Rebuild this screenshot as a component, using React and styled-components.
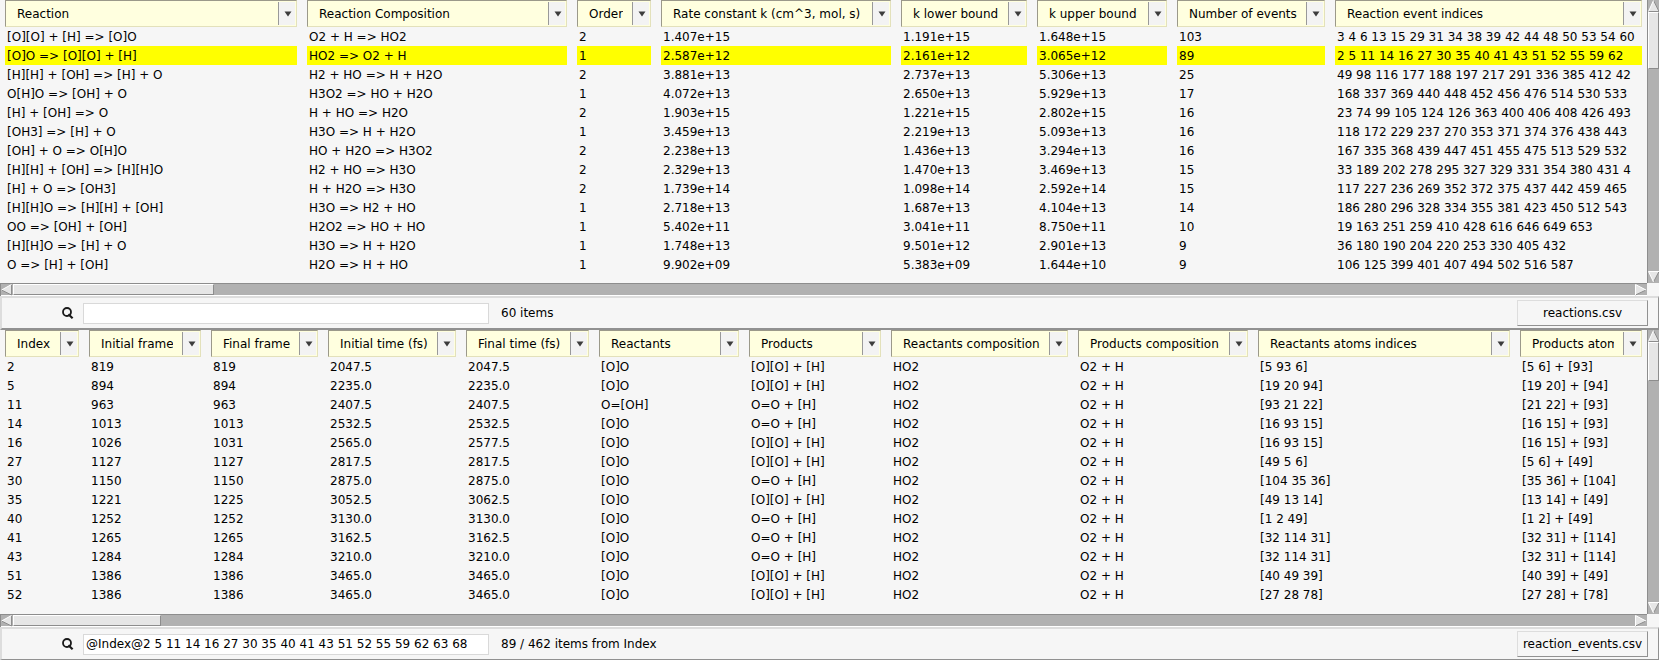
import React from "react";
import styled, { createGlobalStyle, css } from "styled-components";

const GlobalStyle = createGlobalStyle`
  * { box-sizing: border-box; }
  body { margin: 0; background: #f6f6f6; }
  body, button, input {
    font-family: "DejaVu Sans", sans-serif;
    font-size: 12px;
    color: #000;
  }
  button, input { margin: 0; padding: 0; border-radius: 0; }
`;

const Window = styled.main`
  display: grid;
  grid-template-rows: 1fr 1fr;
  min-height: 100vh;
  background: #f6f6f6;
`;

const Panel = styled.section`
  display: flex;
  flex-direction: column;
  min-width: 0;
`;

const ScrollArea = styled.div`
  flex: 1;
  display: grid;
  grid-template-columns: minmax(0, 1fr) 12px;
  grid-template-rows: 1fr 13px;
`;

const Viewport = styled.div`
  overflow: hidden;
`;

const Grid = styled.table`
  width: 100%;
  table-layout: fixed;
  border-collapse: collapse;
`;

const HeadCell = styled.th`
  height: 27px;
  padding: 0 5px;
  text-align: left;
  font-weight: normal;
`;

const HeadBox = styled.div`
  display: flex;
  height: 27px;
  padding: 1px 1px 1px 11px;
  background: #ffffdf;
  border: 1px solid;
  border-color: #9b998a #e3e1bb #e3e1bb #9b998a;
`;

const HeadLabel = styled.span`
  flex: 1;
  min-width: 0;
  margin-right: 9px;
  overflow: hidden;
  white-space: nowrap;
  line-height: 25px;
`;

const HeadButton = styled.button`
  flex: none;
  width: 17px;
  padding: 1px 0 0 1px;
  border: 0;
  border-left: 1px solid #999;
  background: #f3f3f3;
  display: flex;
  align-items: center;
  justify-content: center;
`;

const BodyCell = styled.td`
  height: 19px;
  padding: 0 5px;
`;

const CellText = styled.div`
  height: 19px;
  padding-left: 2px;
  overflow: hidden;
  white-space: nowrap;
  line-height: 21px;
  background: ${(p) => (p.$selected ? "#ffff00" : "transparent")};
`;

const Bar = styled.div`
  display: flex;
  flex-direction: ${(p) => (p.$vertical ? "column" : "row")};
  background: #b1b1b1;
  border: 0 solid #8d8d8d;
  ${(p) =>
    p.$vertical
      ? css`border-left-width: 1px;`
      : css`
          border-top-width: 1px;
          border-left-width: 1px;
          box-shadow: inset 0 -1px #fff;
        `}
`;

const ArrowButton = styled.button`
  flex: none;
  width: 12px;
  height: 12px;
  border: 0;
  background: transparent;
  display: flex;
`;

const Track = styled.div`
  flex: 1;
  display: flex;
  flex-direction: inherit;
`;

const Thumb = styled.div`
  background: #e6e6e6;
  border: 1px solid;
  border-color: #fff #8d8d8d #8d8d8d #fff;
  ${(p) => !p.$vertical && css`margin-bottom: 1px;`}
`;

const Toolbar = styled.form`
  flex: none;
  display: flex;
  align-items: center;
  height: ${(p) => (p.$last ? 33 : 34)}px;
  padding: 2px 10px 2px 60px;
  border: solid;
  border-width: 2px 1px ${(p) => (p.$last ? 1 : 2)}px 2px;
  border-color: #dddddd #919191 #919191 #dddddd;
`;

const SearchLabel = styled.label`
  display: flex;
  margin-right: 9px;
`;

const SearchInput = styled.input`
  width: 406px;
  height: 21px;
  padding: 0 2px;
  border: 1px solid #d9d9d9;
  background: #fff;
  outline: 0;
`;

const Status = styled.output`
  flex: 1;
  margin-left: 12px;
`;

const FileButton = styled.button`
  width: 131px;
  height: 26px;
  border: 1px solid;
  border-color: #dddddd #919191 #919191 #dddddd;
  background: #f6f6f6;
`;

const arrows = {
  left: { face: "M0.5 6 L10.5 0.5 V11 Z", light: "M0.5 6 L10.5 0.5", dark: "M0.5 6 L10.5 11 V0.5" },
  right: { face: "M0.5 0.5 L11 6 L0.5 11 Z", light: "M0.5 11 V0.5 L11 6", dark: "M11 6 L0.5 11" },
  up: { face: "M5.5 0.5 L11 11.5 H0.5 Z", light: "M0.5 11.5 L5.5 0.5", dark: "M5.5 0.5 L11 11.5 H0.5" },
  down: { face: "M0.5 0.5 H11 L5.5 11 Z", light: "M5.5 11 L0.5 0.5 H11", dark: "M11 0.5 L5.5 11" },
};

function ScrollArrow({ direction }) {
  const { face, light, dark } = arrows[direction];
  return (
    <ArrowButton type="button" aria-label={`Scroll ${direction}`}>
      <svg width="12" height="12" viewBox="0 0 12 12" fill="none">
        <path d={face} fill="#e6e6e6" />
        <path d={dark} stroke="#8d8d8d" />
        <path d={light} stroke="#fff" />
      </svg>
    </ArrowButton>
  );
}

function ScrollBar({ vertical, share }) {
  return (
    <Bar
      $vertical={vertical}
      role="scrollbar"
      aria-orientation={vertical ? "vertical" : "horizontal"}
      aria-valuenow={0}
    >
      <ScrollArrow direction={vertical ? "up" : "left"} />
      <Track>
        <Thumb $vertical={vertical} style={{ flexBasis: `${share * 100}%` }} />
      </Track>
      <ScrollArrow direction={vertical ? "down" : "right"} />
    </Bar>
  );
}

function DataTable({ columns, rows, selected }) {
  return (
    <Grid>
      <colgroup>
        {columns.map(([name, width]) => (
          <col key={name} style={{ width }} />
        ))}
      </colgroup>
      <thead>
        <tr>
          {columns.map(([name]) => (
            <HeadCell key={name} scope="col">
              <HeadBox>
                <HeadLabel>{name}</HeadLabel>
                <HeadButton type="button" aria-label={`${name} menu`}>
                  <svg width="8" height="6" viewBox="0 0 8 6">
                    <path d="M0.5 0.5 H7.5 L4 5.5 Z" fill="#3c3c3c" />
                  </svg>
                </HeadButton>
              </HeadBox>
            </HeadCell>
          ))}
        </tr>
      </thead>
      <tbody>
        {rows.map((row, r) => (
          <tr key={r}>
            {row.map((value, c) => (
              <BodyCell key={c}>
                <CellText $selected={r === selected}>{value}</CellText>
              </BodyCell>
            ))}
          </tr>
        ))}
      </tbody>
    </Grid>
  );
}

function TablePanel({ id, columns, rows, selected, shares, query, status, file, last }) {
  return (
    <Panel>
      <ScrollArea>
        <Viewport>
          <DataTable columns={columns} rows={rows} selected={selected} />
        </Viewport>
        <ScrollBar vertical share={shares[1]} />
        <ScrollBar share={shares[0]} />
      </ScrollArea>
      <Toolbar $last={last} onSubmit={(e) => e.preventDefault()}>
        <SearchLabel htmlFor={id} aria-label="Search">
          <svg width="12" height="12" viewBox="0 0 12 12" fill="none" stroke="#1a1a1a">
            <circle cx="5" cy="5" r="4" strokeWidth="1.8" />
            <path d="M6.4 7.2 L10.6 11.2" strokeWidth="2.2" />
          </svg>
        </SearchLabel>
        <SearchInput id={id} type="text" defaultValue={query} />
        <Status>{status}</Status>
        <FileButton type="button">{file}</FileButton>
      </Toolbar>
    </Panel>
  );
}

const reactionColumns = [
  ["Reaction", 302],
  ["Reaction Composition", 270],
  ["Order", 84],
  ["Rate constant k (cm^3, mol, s)", 240],
  ["k lower bound", 136],
  ["k upper bound", 140],
  ["Number of events", 158],
  ["Reaction event indices", "auto"],
];

const reactions = [
  ["[O][O] + [H] => [O]O", "O2 + H => HO2", "2", "1.407e+15", "1.191e+15", "1.648e+15", "103", "3 4 6 13 15 29 31 34 38 39 42 44 48 50 53 54 60"],
  ["[O]O => [O][O] + [H]", "HO2 => O2 + H", "1", "2.587e+12", "2.161e+12", "3.065e+12", "89", "2 5 11 14 16 27 30 35 40 41 43 51 52 55 59 62"],
  ["[H][H] + [OH] => [H] + O", "H2 + HO => H + H2O", "2", "3.881e+13", "2.737e+13", "5.306e+13", "25", "49 98 116 177 188 197 217 291 336 385 412 42"],
  ["O[H]O => [OH] + O", "H3O2 => HO + H2O", "1", "4.072e+13", "2.650e+13", "5.929e+13", "17", "168 337 369 440 448 452 456 476 514 530 533"],
  ["[H] + [OH] => O", "H + HO => H2O", "2", "1.903e+15", "1.221e+15", "2.802e+15", "16", "23 74 99 105 124 126 363 400 406 408 426 493"],
  ["[OH3] => [H] + O", "H3O => H + H2O", "1", "3.459e+13", "2.219e+13", "5.093e+13", "16", "118 172 229 237 270 353 371 374 376 438 443"],
  ["[OH] + O => O[H]O", "HO + H2O => H3O2", "2", "2.238e+13", "1.436e+13", "3.294e+13", "16", "167 335 368 439 447 451 455 475 513 529 532"],
  ["[H][H] + [OH] => [H][H]O", "H2 + HO => H3O", "2", "2.329e+13", "1.470e+13", "3.469e+13", "15", "33 189 202 278 295 327 329 331 354 380 431 4"],
  ["[H] + O => [OH3]", "H + H2O => H3O", "2", "1.739e+14", "1.098e+14", "2.592e+14", "15", "117 227 236 269 352 372 375 437 442 459 465"],
  ["[H][H]O => [H][H] + [OH]", "H3O => H2 + HO", "1", "2.718e+13", "1.687e+13", "4.104e+13", "14", "186 280 296 328 334 355 381 423 450 512 543"],
  ["OO => [OH] + [OH]", "H2O2 => HO + HO", "1", "5.402e+11", "3.041e+11", "8.750e+11", "10", "19 163 251 259 410 428 616 646 649 653"],
  ["[H][H]O => [H] + O", "H3O => H + H2O", "1", "1.748e+13", "9.501e+12", "2.901e+13", "9", "36 180 190 204 220 253 330 405 432"],
  ["O => [H] + [OH]", "H2O => H + HO", "1", "9.902e+09", "5.383e+09", "1.644e+10", "9", "106 125 399 401 407 494 502 516 587"],
];

const eventColumns = [
  ["Index", 84],
  ["Initial frame", 122],
  ["Final frame", 117],
  ["Initial time (fs)", 138],
  ["Final time (fs)", 133],
  ["Reactants", 150],
  ["Products", 142],
  ["Reactants composition", 187],
  ["Products composition", 180],
  ["Reactants atoms indices", 262],
  ["Products atoms indices", "auto"],
];

const events = [
  ["2", "819", "819", "2047.5", "2047.5", "[O]O", "[O][O] + [H]", "[5 93 6]", "[5 6] + [93]"],
  ["5", "894", "894", "2235.0", "2235.0", "[O]O", "[O][O] + [H]", "[19 20 94]", "[19 20] + [94]"],
  ["11", "963", "963", "2407.5", "2407.5", "O=[OH]", "O=O + [H]", "[93 21 22]", "[21 22] + [93]"],
  ["14", "1013", "1013", "2532.5", "2532.5", "[O]O", "O=O + [H]", "[16 93 15]", "[16 15] + [93]"],
  ["16", "1026", "1031", "2565.0", "2577.5", "[O]O", "[O][O] + [H]", "[16 93 15]", "[16 15] + [93]"],
  ["27", "1127", "1127", "2817.5", "2817.5", "[O]O", "[O][O] + [H]", "[49 5 6]", "[5 6] + [49]"],
  ["30", "1150", "1150", "2875.0", "2875.0", "[O]O", "O=O + [H]", "[104 35 36]", "[35 36] + [104]"],
  ["35", "1221", "1225", "3052.5", "3062.5", "[O]O", "[O][O] + [H]", "[49 13 14]", "[13 14] + [49]"],
  ["40", "1252", "1252", "3130.0", "3130.0", "[O]O", "O=O + [H]", "[1 2 49]", "[1 2] + [49]"],
  ["41", "1265", "1265", "3162.5", "3162.5", "[O]O", "O=O + [H]", "[32 114 31]", "[32 31] + [114]"],
  ["43", "1284", "1284", "3210.0", "3210.0", "[O]O", "O=O + [H]", "[32 114 31]", "[32 31] + [114]"],
  ["51", "1386", "1386", "3465.0", "3465.0", "[O]O", "[O][O] + [H]", "[40 49 39]", "[40 39] + [49]"],
  ["52", "1386", "1386", "3465.0", "3465.0", "[O]O", "[O][O] + [H]", "[27 28 78]", "[27 28] + [78]"],
].map((row) => [...row.slice(0, 7), "HO2", "O2 + H", ...row.slice(7)]);

export default function App() {
  return (
    <>
      <GlobalStyle />
      <Window>
        <TablePanel
          id="reactions-search"
          columns={reactionColumns}
          rows={reactions}
          selected={1}
          shares={[0.124, 0.22]}
          query=""
          status="60 items"
          file="reactions.csv"
        />
        <TablePanel
          id="events-search"
          columns={eventColumns}
          rows={events}
          shares={[0.091, 0.15]}
          query="@Index@2 5 11 14 16 27 30 35 40 41 43 51 52 55 59 62 63 68"
          status="89 / 462 items from Index"
          file="reaction_events.csv"
          last
        />
      </Window>
    </>
  );
}
